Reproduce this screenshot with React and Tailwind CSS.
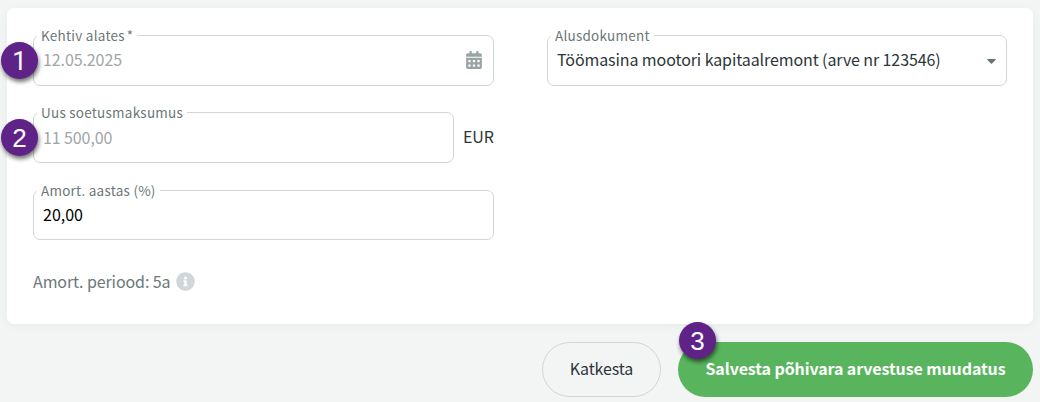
import { FaCalendarAlt, FaInfoCircle } from 'react-icons/fa'

function StepBadge({ number, className }) {
  return (
    <span
      className={`absolute z-10 flex size-[37px] items-center justify-center rounded-full bg-[#5f2287] text-[26px] leading-none font-normal tracking-normal text-white shadow-[1px_3px_4px_rgba(0,0,0,0.55)] ${className}`}
    >
      {number}
    </span>
  )
}

function Field({ label, className, children }) {
  return (
    <div className={`relative flex items-center rounded-[7px] border border-[#d0d6d6] pr-[10px] pl-[9px] ${className}`}>
      <label className="absolute -top-[11px] left-[3px] bg-white px-1 text-[13.5px] leading-5 tracking-[0.24px] whitespace-nowrap text-[#6b7778]">
        {label}
      </label>
      {children}
    </div>
  )
}

export default function App() {
  return (
    <div className="h-[402px] w-[1040px] overflow-hidden bg-[#f3f5f5] px-[7px] pt-2 font-['Noto_Sans_CJK_JP',sans-serif] text-[16px] leading-6 tracking-[-0.1px] text-[#2c3638]">
      <div className="flex h-[316px] items-start gap-[53px] rounded-[7px] bg-white px-[26px] pt-[27px] shadow-[0_2px_10px_rgba(40,70,70,0.06)]">
        {/* Left column */}
        <div className="w-[461px]">
          <Field label={<>Kehtiv alates<span className="ml-0.5">*</span></>} className="h-[51px]">
            <StepBadge number={1} className="top-[6px] -left-[33px] font-['Roboto',sans-serif]" />
            <span className="flex-1 pb-[3px] text-[#9fa6a7]">12.05.2025</span>
            <FaCalendarAlt size={18} className="mb-px text-[#99a4a4]" />
          </Field>

          <div className="mt-[26px] flex items-center gap-[9px]">
            <Field label="Uus soetusmaksumus" className="h-[51px] w-[421px]">
              <StepBadge number={2} className="top-[6px] -left-[33px] font-['Liberation_Sans',sans-serif]" />
              <span className="pb-px text-[#9fa6a7]">11 500,00</span>
            </Field>
            <span className="pb-[3px] tracking-normal">EUR</span>
          </div>

          <Field label="Amort. aastas (%)" className="mt-[27px] h-[50px]">
            <span className="pb-0.5 tracking-normal text-black">20,00</span>
          </Field>

          <div className="mt-[29px] flex items-center gap-[6px] text-[#6b7778]">
            <span>Amort. periood: 5a</span>
            <FaInfoCircle size={19} className="text-[#d1d7d9]" />
          </div>
        </div>

        {/* Right column */}
        <Field label="Alusdokument" className="h-[51px] w-[460px]">
          <span className="flex-1 pb-[3px]">Töömasina mootori kapitaalremont (arve nr 123546)</span>
          <svg className="mt-px" width="9" height="5" viewBox="0 0 9 5" fill="#667374">
            <path d="M0.5 0H8.5Q9 0.5 8.5 1L5 4.6Q4.5 5 4 4.6L0.5 1Q0 0.5 0.5 0Z" />
          </svg>
        </Field>
      </div>

      {/* Actions */}
      <div className="mt-[18px] flex justify-end gap-[17px]">
        <button className="h-[55px] w-[119px] rounded-full border border-[#d0d6d8] pb-[3px]">Katkesta</button>
        <div className="relative">
          <StepBadge number={3} className="-top-[20px] left-px font-['Liberation_Sans',sans-serif]" />
          <button className="h-[55px] w-[355px] rounded-full bg-[#58b55d] pb-[3px] font-bold text-white">
            Salvesta põhivara arvestuse muudatus
          </button>
        </div>
      </div>
    </div>
  )
}
